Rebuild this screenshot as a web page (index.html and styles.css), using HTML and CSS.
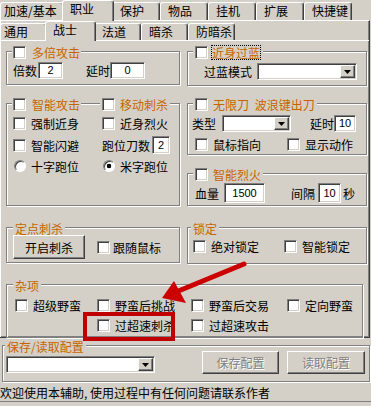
FILE: index.html
```html
<!DOCTYPE html>
<html lang="zh-CN">
<head>
<meta charset="utf-8">
<link rel="stylesheet" href="styles.css">
</head>
<body>
<div class="win">
  <div class="tabs tabs-outer">
    <div class="tab tab-first tab-wide">加速/基本</div>
    <div class="tab tab-active">职业</div>
    <div class="tab">保护</div>
    <div class="tab">物品</div>
    <div class="tab">挂机</div>
    <div class="tab">扩展</div>
    <div class="tab">快捷键</div>
  </div>
  <div class="panel">
    <div class="tabs tabs-inner">
      <div class="tab tab-first">通用</div>
      <div class="tab tab-active">战士</div>
      <div class="tab">法道</div>
      <div class="tab">暗杀</div>
      <div class="tab">防暗杀</div>
    </div>
    <div class="page">
      <div class="row row-a">
        <div class="group g-left g-short">
          <div class="gtitle t-left"><div class="gt gt-left"><span class="cb"></span><span class="otext">多倍攻击</span></div></div>
          <div class="line line-multi">
            <span>倍数</span><span class="field f-bei">2</span><span class="lab-delay">延时</span><span class="field f-delay">0</span>
          </div>
        </div>
        <div class="group g-right g-short2">
          <div class="gtitle t-right"><div class="gt"><span class="cb"></span><span class="otext focus">近身过蓝</span></div></div>
          <div class="line line-lan">
            <span>过蓝模式</span>
            <span class="combo c-lan"><span class="combo-btn"><svg width="7" height="4" viewBox="0 0 7 4"><path d="M0 0H7L3.5 4Z" fill="#000"/></svg></span></span>
          </div>
        </div>
      </div>

      <div class="row row-b">
        <div class="group g-left g-smart">
          <div class="gtitle t-left">
            <div class="gt gt-left"><span class="cb"></span><span class="otext">智能攻击</span></div>
            <div class="gt gt-second"><span class="cb"></span><span class="otext">移动刺杀</span></div>
          </div>
          <div class="smart-grid">
            <div class="chk"><span class="cb"></span>强制近身</div>
            <div class="chk"><span class="cb"></span>近身烈火</div>
            <div class="chk"><span class="cb"></span>智能闪避</div>
            <div class="pair"><span>跑位刀数</span><span class="field f-run">2</span></div>
            <div class="chk chk-radio"><span class="rb"></span>十字跑位</div>
            <div class="chk chk-radio"><span class="rb rb-on"></span>米字跑位</div>
          </div>
        </div>
        <div class="col-right">
          <div class="group g-right g-wuxian">
            <div class="gtitle t-right"><div class="gt"><span class="cb"></span><span class="otext spaced">无限刀 波浪键出刀</span></div></div>
            <div class="line line-wx">
              <span>类型</span>
              <span class="combo c-type"><span class="combo-btn"><svg width="7" height="4" viewBox="0 0 7 4"><path d="M0 0H7L3.5 4Z" fill="#000"/></svg></span></span>
              <span class="lab-wx">延时</span><span class="field f-wx">10</span>
            </div>
            <div class="wx-grid">
              <div class="chk"><span class="cb"></span>鼠标指向</div>
              <div class="chk"><span class="cb"></span>显示动作</div>
            </div>
          </div>
          <div class="group g-right g-liehuo">
            <div class="gtitle t-right"><div class="gt"><span class="cb"></span><span class="otext">智能烈火</span></div></div>
            <div class="line line-lh">
              <span>血量</span><span class="field f-blood">1500</span><span class="lab-gap">间隔</span><span class="field f-gap">10</span><span class="lab-sec">秒</span>
            </div>
          </div>
        </div>
      </div>

      <div class="row row-c">
        <div class="group g-left g-stab">
          <div class="gtitle t-stab"><div class="gt"><span class="otext">定点刺杀</span></div></div>
          <div class="line line-stab">
            <div class="btn btn-stab">开启刺杀</div>
            <div class="chk chk-follow"><span class="cb"></span>跟随鼠标</div>
          </div>
        </div>
        <div class="group g-right g-lock">
          <div class="gtitle t-lock"><div class="gt"><span class="otext">锁定</span></div></div>
          <div class="lock-grid">
            <div class="chk"><span class="cb"></span>绝对锁定</div>
            <div class="chk"><span class="cb"></span>智能锁定</div>
          </div>
        </div>
      </div>

      <div class="group g-misc">
        <div class="gtitle t-stab"><div class="gt"><span class="otext">杂项</span></div></div>
        <div class="misc-grid">
          <div class="chk"><span class="cb"></span>超级野蛮</div>
          <div class="chk"><span class="cb"></span>野蛮后挑战</div>
          <div class="chk"><span class="cb"></span>野蛮后交易</div>
          <div class="chk"><span class="cb"></span>定向野蛮</div>
          <div></div>
          <div class="chk"><span class="cb"></span>过超速刺杀</div>
          <div class="chk"><span class="cb"></span>过超速攻击</div>
        </div>
      </div>
    </div>
  </div>

  <div class="group g-config">
    <div class="gtitle t-config"><div class="gt"><span class="otext">保存/读取配置</span></div></div>
    <div class="line line-config">
      <span class="combo c-config"><span class="combo-btn"><svg width="7" height="4" viewBox="0 0 7 4"><path d="M0 0H7L3.5 4Z" fill="#000"/></svg></span></span>
      <div class="btn btn-disabled btn-save">保存配置</div>
      <div class="btn btn-disabled btn-load">读取配置</div>
    </div>
  </div>

  <div class="status">欢迎使用本辅助, 使用过程中有任何问题请联系作者</div>

  <div class="mark"></div>
  <svg class="arrow" width="371" height="406" viewBox="0 0 371 406">
    <line x1="244" y1="264" x2="176" y2="292" stroke="#cc0000" stroke-width="5" stroke-linecap="round"/>
    <polygon points="162,298 174,281 186,303" fill="#cc0000"/>
  </svg>
</div>
</body>
</html>
```

FILE: styles.css
```css
* { box-sizing: border-box; }
html, body { margin: 0; padding: 0; }
body {
  width: 371px;
  height: 406px;
  overflow: hidden;
  background: #d4d0c8;
  color: #000;
  font: 12px/13px "Noto Sans CJK SC", "Noto Sans CJK JP", sans-serif;
}
.win { position: relative; width: 371px; height: 406px; }

/* ---------- tabs ---------- */
.tabs { display: flex; align-items: flex-end; }
.tabs-outer { height: 20px; }
.tabs-inner { height: 19px; }
.tab {
  flex: none;
  width: 48px;
  height: 18px;
  padding: 1px 0 0 7px;
  border: 1px solid;
  border-bottom: 0;
  border-color: #fff #404040 transparent #fff;
  box-shadow: inset -1px 0 0 #808080;
  border-radius: 3px 3px 0 0;
  white-space: nowrap;
}
.tabs-inner .tab { width: 47px; height: 17px; padding-top: 1px; }
.tab-first { padding-left: 3px; }
.tab-wide { width: 64px; }
.tab.tab-active {
  position: relative;
  z-index: 1;
  background: #d4d0c8;
  width: 52px;
  height: 21px;
  margin: 0 -2px -1px;
  padding: 1px 0 0 7px;
}
.tabs-inner .tab.tab-active { width: 51px; height: 20px; padding-top: 1px; }

/* ---------- panels ---------- */
.panel {
  width: 370px;
  border-top: 1px solid #fff;
  border-right: 1px solid #404040;
  border-bottom: 1px solid #404040;
  box-shadow: inset 1px 0 0 #fff, inset -1px -1px 0 #808080;
}
.page {
  height: 297px;
  border-top: 1px solid #fff;
}

/* ---------- group boxes ---------- */
.group {
  display: flex;
  flex-direction: column;
  border: 1px solid #808080;
  box-shadow: 1px 1px 0 #fff, inset 1px 1px 0 #fff;
}
.gtitle {
  display: flex;
  align-items: center;
  height: 13px;
  margin-top: -6px;
}
.gt {
  display: flex;
  align-items: center;
  gap: 5px;
  padding: 0 2px;
  background: #d4d0c8;
  white-space: nowrap;
}
.otext { color: #c86400; }
.spaced { word-spacing: 3px; }
.focus { border: 1px dotted #000; padding: 0; margin-left: -2px; line-height: 13px; }

.t-left { margin-left: 5px; }
.gt-left { padding: 0 1px; gap: 6px; }
.gt-second { margin-left: 19px; }
.t-right { margin-left: 5px; }
.t-stab { margin-left: 6px; }
.t-lock { margin-left: 3px; }
.t-config { margin-left: 2px; }

.row { display: flex; padding-left: 6px; gap: 7px; }
.row-a { margin-top: 10px; }
.row-b { margin-top: 17px; }
.row-c { margin-top: 21px; }
.g-left { width: 174px; }
.g-right { width: 180px; }
.g-short { height: 34px; }
.g-short2 { height: 35px; }
.g-smart { height: 103px; }
.col-right { display: flex; flex-direction: column; gap: 18px; }
.g-wuxian { height: 52px; }
.g-liehuo { height: 33px; }
.g-stab { height: 36px; }
.g-lock { height: 37px; }
.g-misc { width: 357px; height: 54px; margin: 20px 0 0 6px; }

/* ---------- controls ---------- */
.cb {
  flex: none;
  width: 13px;
  height: 13px;
  background: #fff;
  border: 1px solid;
  border-color: #808080 #fff #fff #808080;
  box-shadow: inset 1px 1px 0 #404040, inset -1px -1px 0 #d4d0c8;
}
.rb {
  flex: none;
  width: 12px;
  height: 12px;
  margin-left: 1px;
  border-radius: 50%;
  background: #fff;
  border: 1px solid;
  border-color: #808080 #fff #fff #808080;
  box-shadow: inset 1px 1px 0 #404040;
}
.rb-on { background: radial-gradient(circle, #000 0 2px, #fff 2.6px); }
.chk { display: flex; align-items: center; gap: 5px; white-space: nowrap; height: 13px; }
.chk-radio { gap: 5px; height: 12px; }

.field {
  flex: none;
  display: flex;
  align-items: center;
  justify-content: center;
  height: 17px;
  background: #fff;
  border: 1px solid;
  border-color: #808080 #fff #fff #808080;
  box-shadow: inset 1px 1px 0 #404040, inset -1px -1px 0 #d4d0c8;
  font: 11px/1 "Liberation Sans", Arial, sans-serif;
}
.combo {
  flex: none;
  display: flex;
  justify-content: flex-end;
  height: 17px;
  padding: 1px;
  background: #fff;
  border: 1px solid;
  border-color: #808080 #fff #fff #808080;
  box-shadow: inset 1px 1px 0 #404040, inset -1px -1px 0 #d4d0c8;
}
.combo-btn {
  display: flex;
  align-items: center;
  justify-content: center;
  width: 15px;
  background: #d4d0c8;
  border: 1px solid;
  border-color: #fff #404040 #404040 #fff;
  box-shadow: inset -1px -1px 0 #808080;
}
.btn {
  flex: none;
  display: flex;
  align-items: center;
  justify-content: center;
  background: #d4d0c8;
  border: 1px solid;
  border-color: #fff #404040 #404040 #fff;
  box-shadow: inset -1px -1px 0 #808080;
  white-space: nowrap;
}
.btn-disabled { color: #808080; text-shadow: 1px 1px 0 #fff; }

/* ---------- group contents ---------- */
.line { display: flex; align-items: center; white-space: nowrap; }

.line-multi { margin-top: 3px; height: 17px; padding-left: 6px; }
.f-bei { width: 25px; margin-left: 1px; }
.lab-delay { margin-left: 23px; }
.f-delay { width: 35px; }

.line-lan { margin-top: 4px; height: 17px; padding-left: 16px; }
.c-lan { width: 100px; margin-left: 5px; }

.smart-grid {
  display: grid;
  grid-template-columns: 89px auto;
  grid-template-rows: 13px 18px 12px;
  row-gap: 6px;
  align-items: center;
  margin-top: 6px;
  padding-left: 6px;
}
.pair { display: flex; align-items: center; gap: 2px; }
.f-run { width: 18px; height: 18px; }

.line-wx { margin-top: 4px; height: 17px; padding-left: 4px; }
.c-type { width: 69px; margin-left: 6px; }
.lab-wx { margin-left: 19px; }
.f-wx { width: 22px; }
.wx-grid {
  display: grid;
  grid-template-columns: 92px auto;
  margin-top: 6px;
  padding-left: 7px;
}

.line-lh { margin-top: 2px; height: 20px; padding-left: 7px; }
.f-blood { width: 41px; height: 20px; margin-left: 5px; }
.lab-gap { margin-left: 26px; }
.f-gap { width: 23px; height: 20px; margin-left: 3px; }
.lab-sec { margin-left: 2px; }

.line-stab { height: 24px; padding-left: 6px; }
.btn-stab { width: 72px; height: 24px; }
.chk-follow { margin-left: 12px; gap: 3px; }

.lock-grid {
  display: grid;
  grid-template-columns: 91px auto;
  margin-top: 5px;
  padding-left: 5px;
}

.misc-grid {
  display: grid;
  grid-template-columns: 82px 94px 96px auto;
  grid-template-rows: 13px 13px;
  row-gap: 7px;
  margin-top: 7px;
  padding-left: 8px;
}

.g-config { width: 368px; height: 37px; margin: 7px 0 0 2px; }
.line-config { margin-top: -2px; align-items: flex-start; padding-left: 3px; }
.c-config { width: 149px; margin-top: 5px; }
.btn-save { width: 77px; height: 23px; margin-left: 47px; }
.btn-load { width: 78px; height: 23px; margin-left: 8px; }

.status {
  margin-top: 2px;
  height: 18px;
  line-height: 17px;
  border-bottom: 1px solid #808080;
  white-space: nowrap;
}

/* ---------- annotation overlay ---------- */
.mark {
  position: absolute;
  left: 83px;
  top: 312px;
  width: 92px;
  height: 29px;
  border: 4px solid #c00000;
}
.arrow { position: absolute; left: 0; top: 0; pointer-events: none; }
```
